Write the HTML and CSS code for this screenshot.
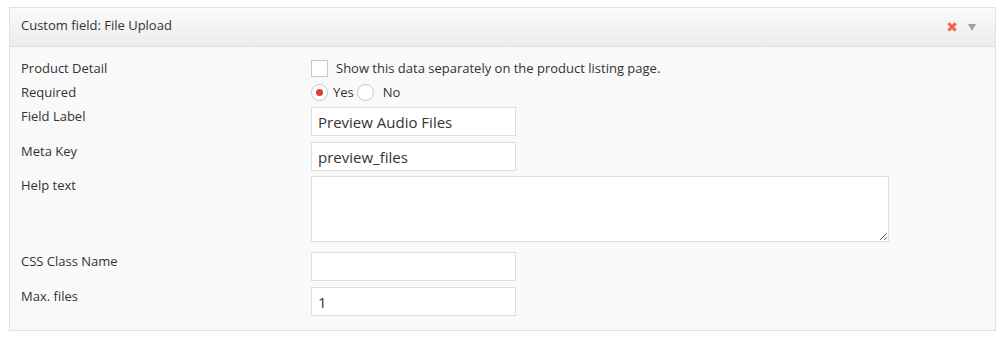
FILE: index.html
```html
<!DOCTYPE html>
<html lang="en">
<head>
    <meta charset="UTF-8">
    <title>Custom field: File Upload</title>
    <link rel="stylesheet" href="styles.css">
</head>
<body>
    <div class="postbox">
        <div class="postbox-header">
            <span class="title">Custom field: File Upload</span>
            <span class="actions">
                <span class="remove">&#10006;</span>
                <span class="toggle"></span>
            </span>
        </div>
        <div class="inside">
            <div class="row row-check">
                <label class="field-label">Product Detail</label>
                <div class="field">
                    <label class="inline"><input type="checkbox" class="check"> Show this data separately on the product listing page.</label>
                </div>
            </div>
            <div class="row row-radio">
                <label class="field-label">Required</label>
                <div class="field">
                    <label class="inline"><input type="radio" name="required" class="radio" checked> Yes</label>
                    <label class="inline inline-no"><input type="radio" name="required" class="radio"> No</label>
                </div>
            </div>
            <div class="row">
                <label class="field-label">Field Label</label>
                <div class="field"><input type="text" class="text" value="Preview Audio Files"></div>
            </div>
            <div class="row row-tight">
                <label class="field-label">Meta Key</label>
                <div class="field"><input type="text" class="text" value="preview_files"></div>
            </div>
            <div class="row row-area">
                <label class="field-label">Help text</label>
                <div class="field"><textarea class="area"></textarea></div>
            </div>
            <div class="row">
                <label class="field-label">CSS Class Name</label>
                <div class="field"><input type="text" class="text" value=""></div>
            </div>
            <div class="row">
                <label class="field-label">Max. files</label>
                <div class="field"><input type="text" class="text" value="1"></div>
            </div>
        </div>
    </div>
</body>
</html>
```

FILE: styles.css
```css
body {
    margin: 0;
    background: #fff;
    font-family: 'Open Sans', sans-serif;
    font-size: 13px;
    color: #333;
}
.postbox {
    margin: 7px 4px 0 9px;
    border: 1px solid #e2e2e2;
    background: #f9f9f9;
    height: 324px;
    box-sizing: border-box;
}
.postbox-header {
    display: flex;
    align-items: center;
    justify-content: space-between;
    height: 39px;
    padding: 0 19px 0 11px;
    background: linear-gradient(to bottom, #fafafa, #ececec);
    border-bottom: 1px solid #dcdcdc;
    box-sizing: border-box;
    color: #333;
}
.title {
    margin-top: -5px;
}
.actions {
    display: flex;
    align-items: center;
    gap: 10px;
}
.remove {
    color: #f2644c;
    font-size: 14px;
    line-height: 14px;
    font-family: 'DejaVu Sans', sans-serif;
    font-weight: bold;
}
.toggle {
    width: 0;
    height: 0;
    border-left: 4px solid transparent;
    border-right: 4px solid transparent;
    border-top: 7px solid #a0a0a0;
}
.inside {
    padding: 12px 0 0 11px;
}
.row {
    display: flex;
    margin-bottom: 6px;
}
.field-label {
    width: 290px;
    flex-shrink: 0;
    line-height: 18px;
}
.field {
    display: flex;
    align-items: center;
}
.row-check {
    margin-bottom: 6px;
    align-items: center;
}
.row-radio {
    margin-bottom: 6px;
    align-items: center;
}
.row-tight {
    margin-bottom: 5px;
}
.row-area {
    margin-bottom: 10px;
}
.inline {
    display: flex;
    align-items: center;
    color: #333;
}
.check,
.radio {
    appearance: none;
    -webkit-appearance: none;
    margin: 0 8px 0 0;
    width: 17px;
    height: 17px;
    border: 1px solid #c8c8c8;
    background: #fff;
    box-sizing: border-box;
}
.radio {
    border-radius: 50%;
    margin-right: 5px;
    position: relative;
}
.inline-no {
    margin-left: 3px;
}
.inline-no .radio {
    margin-right: 9px;
}
.radio:checked::before {
    content: "";
    position: absolute;
    left: 4px;
    top: 4px;
    width: 7px;
    height: 7px;
    border-radius: 50%;
    background: #dd3d36;
}
.text {
    width: 205px;
    height: 29px;
    border: 1px solid #dedede;
    background: #fff;
    box-sizing: border-box;
    padding: 0 6px;
    margin: 0;
    font-family: 'Open Sans', sans-serif;
    font-size: 15px;
    color: #333;
    outline: none;
}
.area {
    width: 578px;
    height: 66px;
    border: 1px solid #dedede;
    background: #fff;
    box-sizing: border-box;
    margin: 0;
    display: block;
}
```
